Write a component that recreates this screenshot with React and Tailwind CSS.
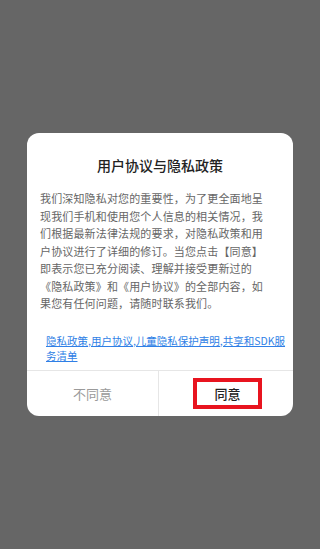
import React from 'react'

const font = { fontFamily: '"Noto Sans CJK SC", "Noto Sans", sans-serif' }

export default function App() {
  return (
    <div className="w-full h-[549px] bg-[#666666] flex items-center justify-center" style={font}>
      <div className="w-[266px] rounded-[12px] bg-white overflow-hidden">
        <h2 className="pt-[22px] text-center text-[14px] leading-[20px] font-medium text-[#222]">
          用户协议与隐私政策
        </h2>

        <p className="mt-[15px] ml-[13px] w-[228px] text-[11px] leading-[17.5px] tracking-[0.15px] text-[#666]">
          我们深知隐私对您的重要性，为了更全面地呈现我们手机和使用您个人信息的相关情况，我们根据最新法律法规的要求，对隐私政策和用户协议进行了详细的修订。当您点击【同意】即表示您已充分阅读、理解并接受更新过的《隐私政策》和《用户协议》的全部内容，如果您有任何问题，请随时联系我们。
        </p>

        <p className="mt-[20px] ml-[19px] w-[242px] mb-[7px] text-[10.5px] leading-[15px] text-[#2f7fe6] underline">
          隐私政策,用户协议,儿童隐私保护声明,共享和SDK服务清单
        </p>

        <div className="flex h-[46px] border-t border-[#e6e6e6]">
          <button className="flex-1 flex items-center justify-center text-[13px] text-[#9a9a9a] border-r border-[#e6e6e6]">
            不同意
          </button>
          <div className="flex-1 flex items-center justify-center pl-[3px]">
            <button className="w-[69px] h-[31px] border-[4px] border-[#e8141f] flex items-center justify-center text-[13px] font-medium text-[#222]">
              同意
            </button>
          </div>
        </div>
      </div>
    </div>
  )
}
